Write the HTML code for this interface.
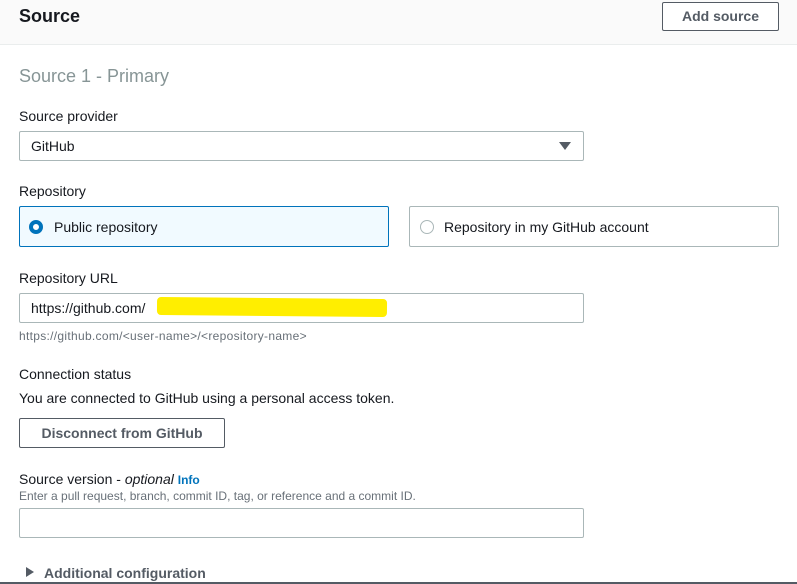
<!DOCTYPE html>
<html><head><style>
*{box-sizing:border-box;margin:0;padding:0}
body{width:797px;height:584px;background:#fff;font-family:"Liberation Sans",sans-serif;color:#16191f;position:relative;overflow:hidden;font-size:14px}
.a{position:absolute}
.hdr{left:0;top:0;width:797px;height:45px;background:#fafafa;border-bottom:1px solid #eaeded}
.box{border:1px solid #aab7b8;border-radius:2px;background:#fff}
.lbl{font-size:14px;color:#16191f}
</style></head><body>
<div class="a hdr"></div>
<div class="a" style="left:19px;top:6px;font-size:18px;font-weight:bold">Source</div>
<div class="a box" style="left:662px;top:2px;width:117px;height:29px;border-color:#545b64;font-weight:bold;color:#545b64;text-align:center;line-height:27px">Add source</div>
<div class="a" style="left:19px;top:66px;font-size:18px;color:#879596">Source 1 - Primary</div>
<div class="a lbl" style="left:19px;top:108px">Source provider</div>
<div class="a box" style="left:19px;top:131px;width:565px;height:30px;padding-left:11px;line-height:28px">GitHub</div>
<div class="a" style="left:559px;top:142px;width:0;height:0;border-left:6px solid transparent;border-right:6px solid transparent;border-top:8px solid #545b64"></div>
<div class="a lbl" style="left:19px;top:183px">Repository</div>
<div class="a" style="left:19px;top:206px;width:370px;height:41px;border:1px solid #0073bb;background:#f1faff;border-radius:2px"></div>
<div class="a" style="left:29px;top:220px;width:14px;height:14px;border-radius:50%;border:4px solid #0073bb;background:#fff"></div>
<div class="a" style="left:54px;top:219px">Public repository</div>
<div class="a box" style="left:409px;top:206px;width:370px;height:41px"></div>
<div class="a" style="left:420px;top:220px;width:14px;height:14px;border-radius:50%;border:1px solid #aab7b8"></div>
<div class="a" style="left:444px;top:219px">Repository in my GitHub account</div>
<div class="a lbl" style="left:19px;top:270px">Repository URL</div>
<div class="a box" style="left:19px;top:293px;width:565px;height:30px;padding-left:11px;line-height:28px">https://github.com/</div>
<div class="a" style="left:157px;top:298px;width:230px;height:18px;background:#ffee00;border-radius:4px;transform:rotate(0.5deg)"></div>
<div class="a" style="left:19px;top:329px;font-size:12px;letter-spacing:0.3px;color:#687078">https://github.com/&lt;user-name&gt;/&lt;repository-name&gt;</div>
<div class="a lbl" style="left:19px;top:366px">Connection status</div>
<div class="a lbl" style="left:19px;top:390px">You are connected to GitHub using a personal access token.</div>
<div class="a box" style="left:19px;top:418px;width:206px;height:30px;border-color:#545b64;font-weight:bold;color:#545b64;text-align:center;line-height:28px">Disconnect from GitHub</div>
<div class="a lbl" style="left:19px;top:471px">Source version - <i>optional</i> <b style="color:#0073bb;font-size:12px">Info</b></div>
<div class="a" style="left:19px;top:489px;font-size:12px;color:#687078">Enter a pull request, branch, commit ID, tag, or reference and a commit ID.</div>
<div class="a box" style="left:19px;top:508px;width:565px;height:30px"></div>
<div class="a" style="left:26px;top:567px;width:0;height:0;border-top:5px solid transparent;border-bottom:5px solid transparent;border-left:8px solid #545b64"></div>
<div class="a" style="left:44px;top:565px;font-weight:bold;color:#545b64">Additional configuration</div>
<div class="a" style="left:0;top:582px;width:797px;height:2px;background:#545b64"></div>
</body></html>
